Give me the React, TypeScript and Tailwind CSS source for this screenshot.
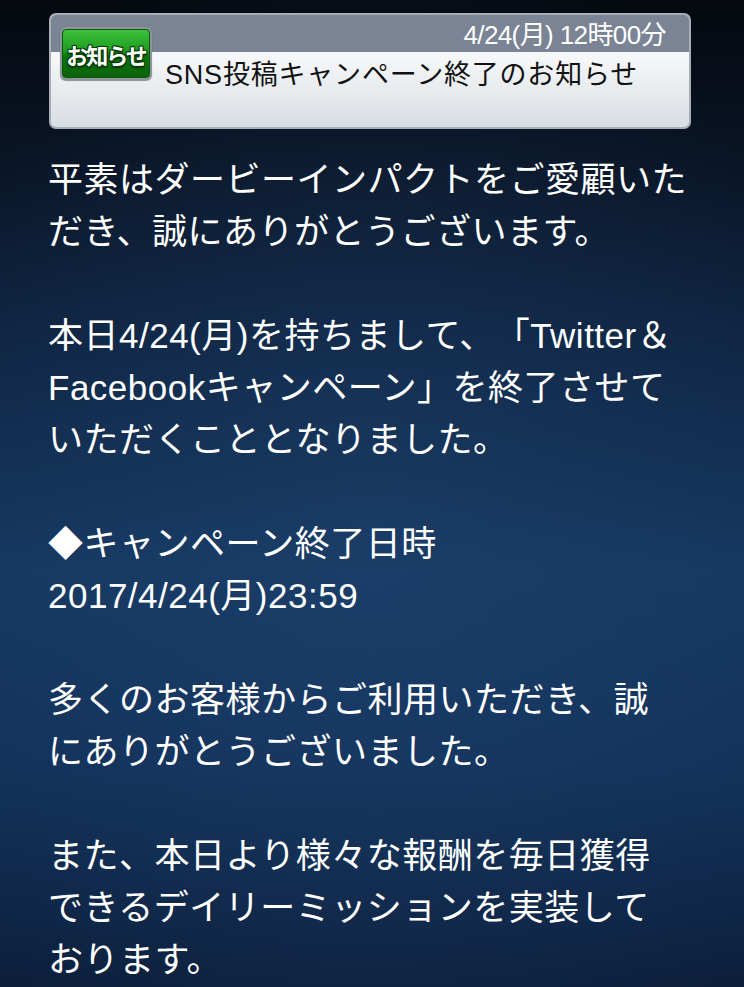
import React from "react";

const lines: string[] = [
  "平素はダービーインパクトをご愛顧いた",
  "だき、誠にありがとうございます。",
  "",
  "本日4/24(月)を持ちまして、「Twitter＆",
  "Facebookキャンペーン」を終了させて",
  "いただくこととなりました。",
  "",
  "◆キャンペーン終了日時",
  "2017/4/24(月)23:59",
  "",
  "多くのお客様からご利用いただき、誠",
  "にありがとうございました。",
  "",
  "また、本日より様々な報酬を毎日獲得",
  "できるデイリーミッションを実装して",
  "おります。",
];

export default function App() {
  return (
    <div
      className="relative w-full h-[987px] overflow-hidden bg-[linear-gradient(to_bottom,#05090f_0%,#08111f_12%,#0f2542_34%,#163861_58%,#13325a_78%,#0c1f3b_100%)] [text-spacing-trim:space-all]"
      style={{ fontFamily: '"Liberation Sans", "Noto Sans CJK JP", sans-serif' }}
    >
      <div className="absolute inset-0 bg-[radial-gradient(ellipse_60%_70%_at_50%_55%,rgba(40,80,130,0.25),rgba(0,0,0,0)_100%)] pointer-events-none" />
      <div className="relative px-[48px] pt-[13px]">
        {/* header card */}
        <div className="ml-[1px] w-[642px] h-[116px] rounded-[7px] border-2 border-[#a9aeb6] overflow-hidden flex flex-col bg-[linear-gradient(to_bottom,#ffffff,#f4f6f8_40%,#d9dee3)]">
          <div className="h-[37px] bg-[#7a8494] flex items-center justify-end pr-[23px]">
            <span className="text-white text-[26px] leading-none tracking-[-0.6px] mt-[2px]">
              4/24(月) 12時00分
            </span>
          </div>
          <div className="flex-1 relative">
            <div className="pl-[114px] pt-[7px] text-[27px] leading-[32px] text-[#111] tracking-[0.8px]">
              SNS投稿キャンペーン終了のお知らせ
            </div>
          </div>
        </div>
        {/* badge */}
        <div className="absolute left-[60px] top-[27px] w-[92px] h-[53px] rounded-[6px] bg-[#8d949c] p-[2px] shadow-[0_1px_1px_rgba(0,0,0,0.4)]">
          <div className="w-full h-full rounded-[4px] border border-[#0b5a0b] bg-[linear-gradient(to_bottom,#3cc23c,#1f9a1f_45%,#0d760d_55%,#0a630a)] flex items-center justify-center">
            <span
              className="text-white font-bold text-[22px] leading-none tracking-[-2px]"
              style={{
                fontFamily: '"Noto Sans CJK JP", sans-serif',
                textShadow:
                  "0 0 2px #063a06, 1px 1px 0 #063a06, -1px -1px 0 #063a06, 1px -1px 0 #063a06, -1px 1px 0 #063a06, 0 2px 2px #042a04",
              }}
            >
              お知らせ
            </span>
          </div>
        </div>

        {/* body */}
        <div className="mt-[25px] text-white text-[35px] leading-[52px] tracking-[0.5px]">
          {lines.map((l, i) => (
            <div key={i} className="h-[52px] whitespace-nowrap">
              {l || "\u00a0"}
            </div>
          ))}
        </div>
      </div>
    </div>
  );
}
